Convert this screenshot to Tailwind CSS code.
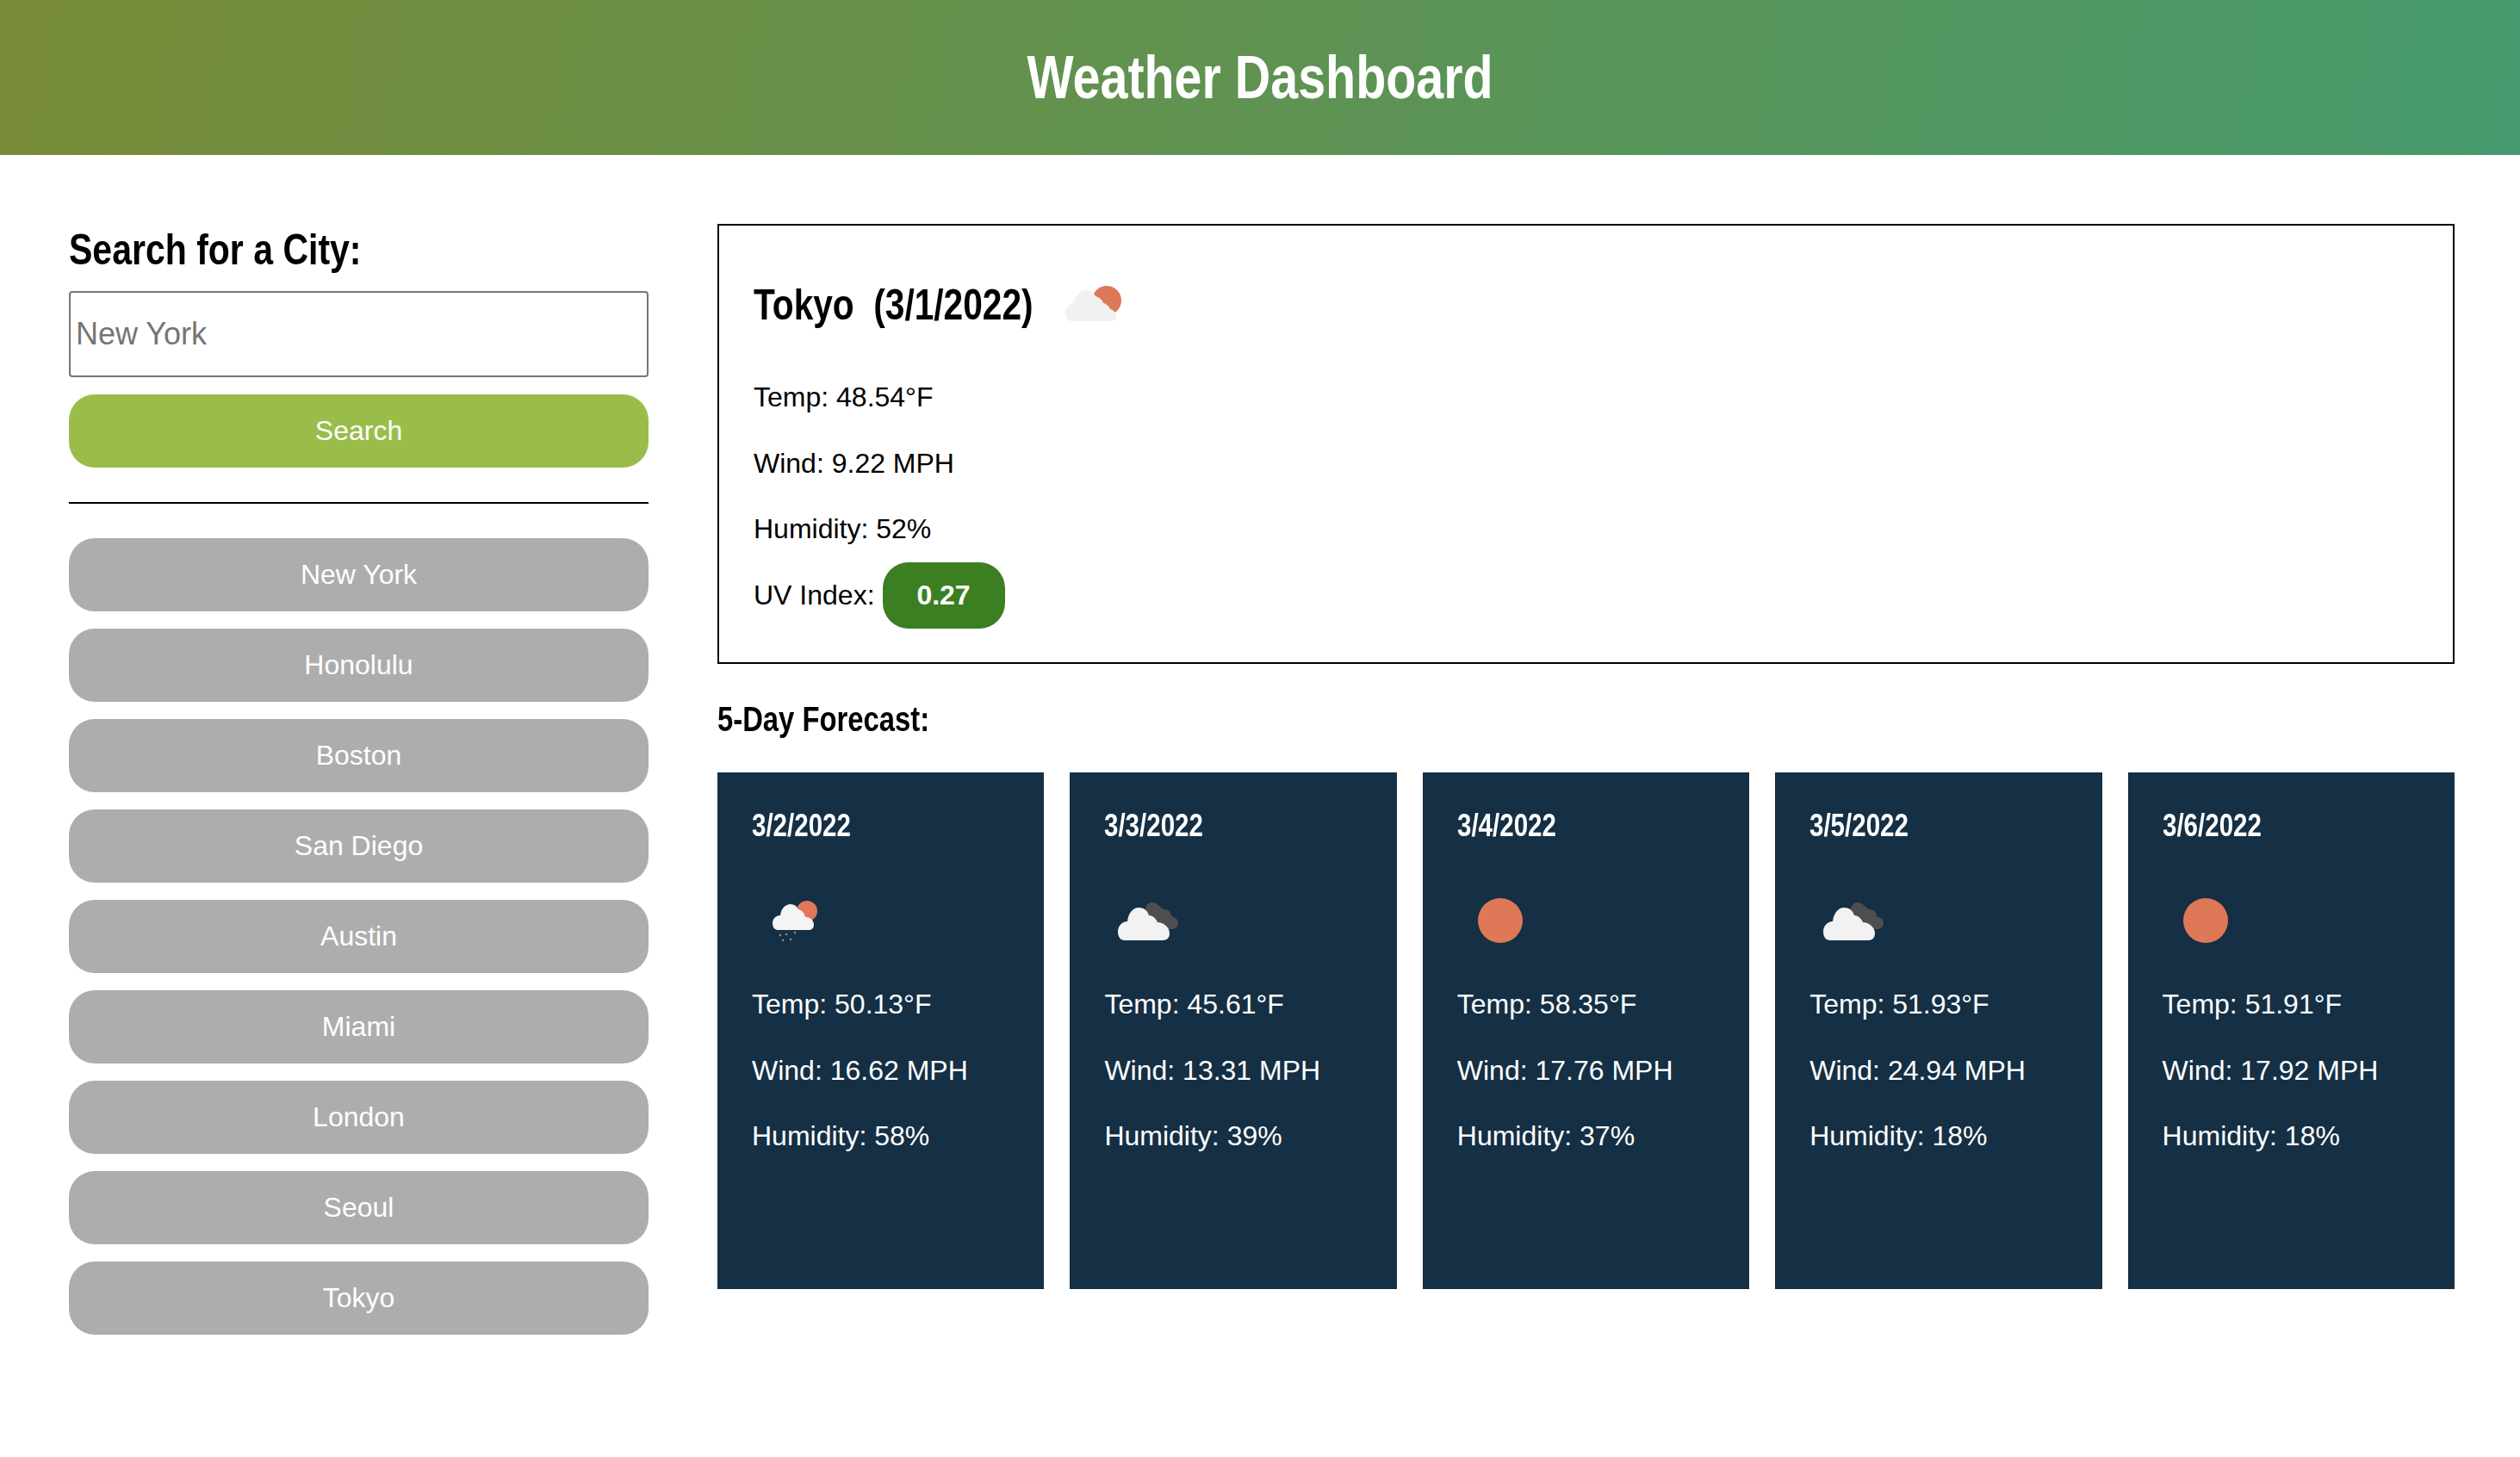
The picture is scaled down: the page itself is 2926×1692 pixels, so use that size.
<!DOCTYPE html>
<html lang="en">
<head>
<meta charset="utf-8">
<title>Weather Dashboard</title>
<script src="https://cdn.jsdelivr.net/npm/@tailwindcss/browser@4"></script>
</head>
<body class="bg-white text-black font-['Liberation_Sans',Arial,sans-serif] text-[32px]">
<header class="h-[180px] flex items-center justify-center bg-[linear-gradient(100deg,#788b37,#469a6d)]">
  <h1 class="font-bold text-[70px] text-white scale-x-[0.82]">Weather Dashboard</h1>
</header>
<main class="flex pl-[80px] pr-[76px] pt-[80px]">
  <aside class="w-[673px] shrink-0 mr-[80px]">
    <h2 class="font-bold text-[50px] h-[78px] leading-[60px] whitespace-nowrap origin-left scale-x-[0.82]">Search for a City:</h2>
    <input class="block w-full h-[100px] border-2 border-[#767676] rounded-[4px] px-[6px] text-[36px] placeholder:text-[#757575]" placeholder="New York">
    <button class="block w-full h-[85px] mt-[20px] pb-[2px] rounded-[30px] bg-[#9abd4a] text-white text-[32px]">Search</button>
    <hr class="border-t-2 border-black mt-[40px] mb-[40px]">
    <div class="flex flex-col gap-[20px]">
      <button class="h-[85px] pb-[2px] rounded-[30px] bg-[#adadad] text-white">New York</button>
      <button class="h-[85px] pb-[2px] rounded-[30px] bg-[#adadad] text-white">Honolulu</button>
      <button class="h-[85px] pb-[2px] rounded-[30px] bg-[#adadad] text-white">Boston</button>
      <button class="h-[85px] pb-[2px] rounded-[30px] bg-[#adadad] text-white">San Diego</button>
      <button class="h-[85px] pb-[2px] rounded-[30px] bg-[#adadad] text-white">Austin</button>
      <button class="h-[85px] pb-[2px] rounded-[30px] bg-[#adadad] text-white">Miami</button>
      <button class="h-[85px] pb-[2px] rounded-[30px] bg-[#adadad] text-white">London</button>
      <button class="h-[85px] pb-[2px] rounded-[30px] bg-[#adadad] text-white">Seoul</button>
      <button class="h-[85px] pb-[2px] rounded-[30px] bg-[#adadad] text-white">Tokyo</button>
    </div>
  </aside>
  <section class="flex-1 min-w-0">
    <div class="h-[511px] border-2 border-black px-[40px] pt-[48px]">
      <div class="flex items-center h-[100px] mb-[13px]">
        <h2 class="w-[325px] font-bold text-[50px] whitespace-pre origin-left scale-x-[0.813] pb-[11px]">Tokyo  (3/1/2022)</h2>
        <svg class="w-[100px] h-[100px] ml-[10px] blur-[0.5px]" viewBox="0 0 100 100">
          <circle cx="75" cy="39" r="17" fill="#df7857"/>
          <path d="M35 63C30 63 27 59 27 53C27 47 31 43 37 42C39 33 44 27 51 27C56 27 60 30 62 34C66 35 70 38 71 42C74 42 78 46 79 49C83 50 86 53 86 57C86 61 83 63 80 63Z" fill="#f1f1f1"/>
        </svg>
      </div>
      <p class="leading-[76.5px]">Temp: 48.54°F</p>
      <p class="leading-[76.5px]">Wind: 9.22 MPH</p>
      <p class="leading-[76.5px]">Humidity: 52%</p>
      <p class="flex items-center h-[77px]">UV Index:<span class="flex items-center justify-center w-[142px] h-[77px] ml-[9px] rounded-[30px] bg-[#3b7f22] text-white font-bold">0.27</span></p>
    </div>
    <h3 class="font-bold text-[40px] h-[126px] pt-[2px] flex items-center whitespace-nowrap origin-left scale-x-[0.82]">5-Day Forecast:</h3>
    <div class="grid grid-cols-5 gap-[30px]">
      <article class="h-[600px] bg-[#152f44] text-white px-[40px] pt-[34px]">
        <h4 class="font-bold text-[36px] leading-[56px] origin-left scale-x-[0.82]">3/2/2022</h4>
        <svg class="block w-[100px] h-[100px] mt-[32px] mb-[9px] blur-[0.5px]" viewBox="0 0 100 100">
          <circle cx="64" cy="39" r="12" fill="#df7857"/>
          <path d="M30 61C26 61 24 57 24 53C24 48 28 44 33 44C34 36 39 31 45 31C49 31 52 33 54 37C58 38 61 41 62 46C67 46 72 49 72 55C72 59 69 61 66 61Z" fill="#f4f4f4"/>
          <g fill="#8d8d8d"><circle cx="33" cy="67" r="1.3"/><circle cx="40" cy="66" r="1.3"/><circle cx="50" cy="64" r="1.3"/><circle cx="36" cy="73" r="1.3"/><circle cx="45" cy="72" r="1.3"/></g>
        </svg>
        <p class="leading-[76.5px]">Temp: 50.13°F</p>
        <p class="leading-[76.5px]">Wind: 16.62 MPH</p>
        <p class="leading-[76.5px]">Humidity: 58%</p>
      </article>
      <article class="h-[600px] bg-[#152f44] text-white px-[40px] pt-[34px]">
        <h4 class="font-bold text-[36px] leading-[56px] origin-left scale-x-[0.82]">3/3/2022</h4>
        <svg class="block w-[100px] h-[100px] mt-[32px] mb-[9px] blur-[0.5px]" viewBox="0 0 100 100">
          <g fill="#4e4e50"><circle cx="56" cy="37" r="8"/><circle cx="70" cy="45" r="8"/><circle cx="79" cy="53" r="7"/><path d="M50 42L60 30L85 50L78 60H55Z"/></g>
          <path d="M24 73C19 73 16 69 16 63C16 56 21 51 27 51C28 42 33 35 40 35C46 35 50 38 52 44C56 44 60 47 62 52C67 52 76 56 76 65C76 70 73 73 68 73Z" fill="#f2f2f2"/>
        </svg>
        <p class="leading-[76.5px]">Temp: 45.61°F</p>
        <p class="leading-[76.5px]">Wind: 13.31 MPH</p>
        <p class="leading-[76.5px]">Humidity: 39%</p>
      </article>
      <article class="h-[600px] bg-[#152f44] text-white px-[40px] pt-[34px]">
        <h4 class="font-bold text-[36px] leading-[56px] origin-left scale-x-[0.82]">3/4/2022</h4>
        <svg class="block w-[100px] h-[100px] mt-[32px] mb-[9px] blur-[0.5px]" viewBox="0 0 100 100"><circle cx="50" cy="50" r="26" fill="#df7857"/></svg>
        <p class="leading-[76.5px]">Temp: 58.35°F</p>
        <p class="leading-[76.5px]">Wind: 17.76 MPH</p>
        <p class="leading-[76.5px]">Humidity: 37%</p>
      </article>
      <article class="h-[600px] bg-[#152f44] text-white px-[40px] pt-[34px]">
        <h4 class="font-bold text-[36px] leading-[56px] origin-left scale-x-[0.82]">3/5/2022</h4>
        <svg class="block w-[100px] h-[100px] mt-[32px] mb-[9px] blur-[0.5px]" viewBox="0 0 100 100">
          <g fill="#4e4e50"><circle cx="56" cy="37" r="8"/><circle cx="70" cy="45" r="8"/><circle cx="79" cy="53" r="7"/><path d="M50 42L60 30L85 50L78 60H55Z"/></g>
          <path d="M24 73C19 73 16 69 16 63C16 56 21 51 27 51C28 42 33 35 40 35C46 35 50 38 52 44C56 44 60 47 62 52C67 52 76 56 76 65C76 70 73 73 68 73Z" fill="#f2f2f2"/>
        </svg>
        <p class="leading-[76.5px]">Temp: 51.93°F</p>
        <p class="leading-[76.5px]">Wind: 24.94 MPH</p>
        <p class="leading-[76.5px]">Humidity: 18%</p>
      </article>
      <article class="h-[600px] bg-[#152f44] text-white px-[40px] pt-[34px]">
        <h4 class="font-bold text-[36px] leading-[56px] origin-left scale-x-[0.82]">3/6/2022</h4>
        <svg class="block w-[100px] h-[100px] mt-[32px] mb-[9px] blur-[0.5px]" viewBox="0 0 100 100"><circle cx="50" cy="50" r="26" fill="#df7857"/></svg>
        <p class="leading-[76.5px]">Temp: 51.91°F</p>
        <p class="leading-[76.5px]">Wind: 17.92 MPH</p>
        <p class="leading-[76.5px]">Humidity: 18%</p>
      </article>
    </div>
  </section>
</main>
</body>
</html>
